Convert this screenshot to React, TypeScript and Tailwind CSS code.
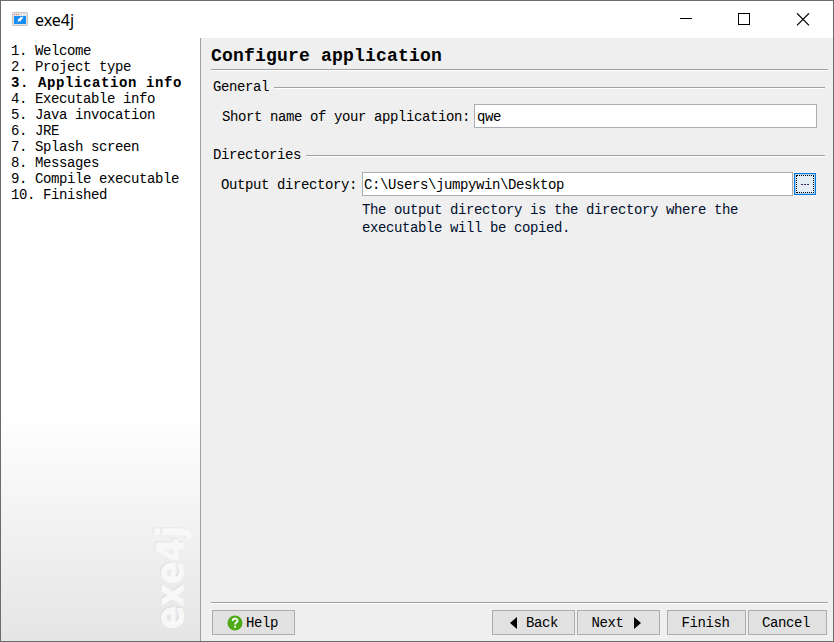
import type { ReactNode } from "react";

const steps = [
  "Welcome",
  "Project type",
  "Application info",
  "Executable info",
  "Java invocation",
  "JRE",
  "Splash screen",
  "Messages",
  "Compile executable",
  "Finished",
];
const current = 2;

function T({ children, className = "" }: { children: ReactNode; className?: string }) {
  return (
    <span className={`inline-block origin-bottom scale-y-[1.1] whitespace-pre ${className}`}>
      {children}
    </span>
  );
}

function Rule() {
  return <div className="h-[2px] w-full border-t border-[#a0a0a0] bg-white" />;
}

function Section({ title }: { title: string }) {
  return (
    <div className="flex h-4 items-center gap-[5px] pr-[8px] pl-[12px]">
      <T>{title}</T>
      <div className="flex-1 pt-px">
        <Rule />
      </div>
    </div>
  );
}

function Button({ children, className }: { children: ReactNode; className: string }) {
  return (
    <button
      className={`flex h-[25px] items-center justify-center border border-[#adadad] bg-[#e1e1e1] ${className}`}
    >
      {children}
    </button>
  );
}

function TitleBar() {
  return (
    <header className="flex h-[37px] shrink-0 items-center bg-white">
      <svg className="ml-[11px]" width="16" height="15" viewBox="0 0 16 15">
        <rect x="0.5" y="0.5" width="15" height="13" rx="1" fill="#e4e4e4" stroke="#c6c4c4" />
        <path d="M2 2.5h1M4 2.5h1M6 2.5h1" stroke="#f0623c" />
        <rect x="2" y="4" width="12" height="8" fill="#168cf5" />
        <path d="M11 4.5 8.6 5.2 7 6.8 5.6 7.2 6.4 8 5.2 10.3 7.5 9 8.3 9.8 8.8 8.4 10.4 6.8Z" fill="#fff" />
      </svg>
      <span className="ml-[7px] font-['Noto_Sans',sans-serif] text-[16px] leading-5 tracking-[0px]">
        exe4j
      </span>
      <svg
        className="mr-[23px] ml-auto"
        width="130"
        height="13"
        viewBox="0 0 130 13"
        fill="none"
        stroke="#000"
        shapeRendering="crispEdges"
      >
        <path d="M0 5.5h12" />
        <rect x="58.5" y="0.5" width="11" height="11" />
        <path d="m117 0.3 12 12M129 0.3l-12 12" strokeWidth="1.2" shapeRendering="auto" />
      </svg>
    </header>
  );
}

function Sidebar() {
  return (
    <aside className="relative w-[200px] shrink-0 border-r border-[#a0a0a0] bg-linear-to-b from-white from-62% to-[#e5e5e5] pt-[5px] pl-[10px]">
      <ol>
        {steps.map((step, i) => (
          <li key={step} className="h-4 leading-4">
            <T className={i === current ? "font-bold tracking-[0.6px]" : ""}>{`${i + 1}. ${step}`}</T>
          </li>
        ))}
      </ol>
      <svg
        className="absolute right-0 bottom-0 overflow-visible"
        width="60"
        height="128"
        viewBox="0 0 60 128"
      >
        <g
          transform="translate(43 116) rotate(-90)"
          className="font-['DejaVu_Sans',sans-serif] text-[37px] font-bold tracking-normal"
        >
          <text x="1" y="-1" textLength="103" lengthAdjust="spacingAndGlyphs" fill="#d8d8d8">
            exe4j
          </text>
          <text
            x="0"
            y="0"
            textLength="103"
            lengthAdjust="spacingAndGlyphs"
            fill="#f8f8f8"
            stroke="#f8f8f8"
            strokeWidth="0.8"
          >
            exe4j
          </text>
        </g>
      </svg>
    </aside>
  );
}

export default function App() {
  return (
    <div className="flex h-[642px] w-[834px] flex-col border border-[#6c6c6c] bg-[#efefef] font-['Liberation_Mono',monospace] text-[14px] leading-4 tracking-[-0.4px] text-black">
      <TitleBar />
      <div className="flex min-h-0 flex-1">
        <Sidebar />
        <main className="flex min-w-0 flex-1 flex-col">
          <h1 className="mt-[6px] h-[25px] pl-[10px] text-[18px] leading-[24px] font-bold tracking-[0.2px]">
            Configure application
          </h1>
          <div className="pr-[5px] pl-[10px]">
            <Rule />
          </div>
          <div className="mt-[8px]">
            <Section title="General" />
          </div>
          <div className="mt-[9px] flex h-6 items-center pr-[16px] pl-[21px]">
            <T className="relative top-px">Short name of your application:</T>
            <div className="ml-[4px] flex h-6 flex-1 items-center border border-[#abadb3] bg-white pl-[2px]">
              <T className="relative top-px">qwe</T>
            </div>
          </div>
          <div className="mt-[19px]">
            <Section title="Directories" />
          </div>
          <div className="mt-[9px] flex h-6 items-center pr-[17px] pl-[20px]">
            <T className="relative top-px">Output directory:</T>
            <div className="ml-[5px] flex h-6 flex-1 items-center border border-[#abadb3] bg-white pl-[1px]">
              <T className="relative top-px">{"C:\\Users\\jumpywin\\Desktop"}</T>
            </div>
            <button className="ml-px flex h-[22px] w-[22px] items-center justify-center border border-[#0078d7] bg-[#a9d3f3] p-px">
              <span className="flex h-[18px] w-[18px] items-center justify-center gap-px border border-dotted border-black bg-[#e5edf4] pt-px">
                <i className="h-px w-[2px] bg-[#35255c]" />
                <i className="h-px w-[2px] bg-[#35255c]" />
                <i className="h-px w-[2px] bg-[#35255c]" />
              </span>
            </button>
          </div>
          <p className="mt-[5px] ml-[161px] text-[#001030]">
            <span className="flex h-[18px] items-center">
              <T>The output directory is the directory where the</T>
            </span>
            <span className="flex h-[18px] items-center">
              <T>executable will be copied.</T>
            </span>
          </p>
          <div className="mt-auto pr-[5px] pl-[10px]">
            <Rule />
          </div>
          <footer className="mt-[6px] mb-[6px] flex pr-[6px] pl-[11px]">
            <Button className="w-[83px] gap-[3px] pr-[2px]">
              <svg width="16" height="16" viewBox="0 0 16 16">
                <circle cx="8" cy="8" r="7.5" fill="#4faa17" />
                <path
                  d="M5.6 6c0-3.1 4.9-3.1 4.9-.3C10.5 7.4 8.1 7.2 8.1 9.4M8.1 10.8v2"
                  fill="none"
                  stroke="#fff"
                  strokeWidth="1.8"
                />
              </svg>
              <T>Help</T>
            </Button>
            <Button className="ml-auto w-[83px] gap-[9px] pl-px">
              <svg width="7" height="12" viewBox="0 0 7 12">
                <path d="M7 0v12L0 6Z" />
              </svg>
              <T>Back</T>
            </Button>
            <Button className="ml-[2px] w-[83px] gap-[10px] pr-[5px]">
              <T>Next</T>
              <svg width="7" height="12" viewBox="0 0 7 12">
                <path d="M0 0v12l7-6Z" />
              </svg>
            </Button>
            <Button className="ml-[7px] w-[79px] pr-[2px]">
              <T>Finish</T>
            </Button>
            <Button className="ml-[2px] w-[79px] pr-[3px]">
              <T>Cancel</T>
            </Button>
          </footer>
        </main>
      </div>
    </div>
  );
}
